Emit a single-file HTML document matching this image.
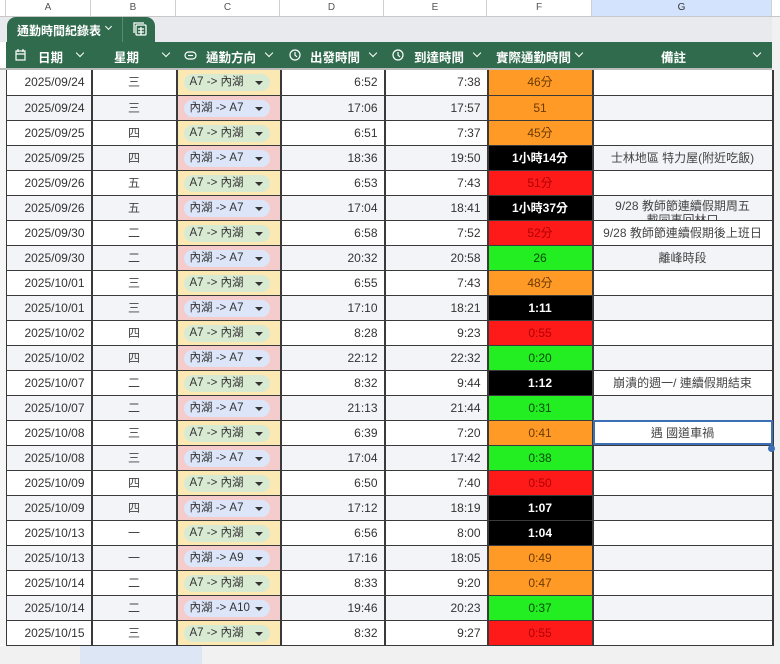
<!DOCTYPE html>
<html><head><meta charset="utf-8"><style>
*{box-sizing:border-box;margin:0;padding:0}
body{width:780px;height:664px;overflow:hidden;background:#fff;font-family:"Liberation Sans","Noto Sans CJK TC",sans-serif;font-size:12px;color:#333;position:relative}
.colh{position:absolute;top:0;left:0;width:780px;height:17px;background:#fff;border-bottom:1px solid #c7c7c7}
.colh div{position:absolute;top:0;height:16px;line-height:16px;text-align:center;font-size:10px;color:#555;border-right:1px solid #d0d0d0}
.tabbar{position:absolute;top:17px;left:0;width:772px;height:25px;background:#e9eaee}
.tab{position:absolute;top:17px;left:7px;width:148px;height:25px;background:#2f6b4c;border-radius:9px 9px 0 0;color:#fff;font-size:12px;font-weight:bold}
.hdr{position:absolute;top:42px;left:6px;width:766px;height:26px;background:#2f6b4c;color:#fff;font-weight:bold;font-size:12.5px}
.hdr span{position:absolute;top:5px}
.cv{position:absolute;width:6px;height:6px;border-right:1.5px solid #fff;border-bottom:1.5px solid #fff;transform:rotate(45deg)}
.hdr .cv{top:8px}
.gap{position:absolute;top:68px;left:0;width:772px;height:2px;background:#bbb}
table{position:absolute;top:70px;left:6px;border-collapse:collapse;table-layout:fixed;width:766px}
tr{height:25px}
td{height:25px;max-height:25px;line-height:14px;border:1px solid #3a3a3a;border-width:0 2px 1px 1px;padding:0 6px;white-space:nowrap;overflow:hidden;font-size:12px;color:#333;vertical-align:middle}
tr:nth-child(even) td{background:#f3f4f8}
td.r{text-align:right}td.c{text-align:center}
td.y{background:#fce8b2!important}td.p{background:#f4cccc!important}
.ch{display:inline-block;vertical-align:middle;height:17px;line-height:17px;border-radius:9px;padding:0 6px;width:86px;font-size:11.5px;position:relative;margin-top:1px}
.y .ch{background:#d9ead3;color:#333}.p .ch{background:#dce6f8;color:#333}
.ch:after{content:"";position:absolute;right:7px;top:7px;border:4px solid transparent;border-top:4px solid #333;border-bottom:0}
td.o{background:#ff9a26!important;color:#6b3a00;text-align:center}
td.k{background:#000!important;color:#fff;font-weight:bold;text-align:center}
td.rd{background:#ff1a1a!important;color:#b00000;text-align:center}
td.g{background:#22ee22!important;color:#0a4a0a;text-align:center}
td.n{text-align:center;color:#444}
.sel{outline:2px solid #3b6fb6;outline-offset:-2px}
.rn{position:absolute;left:0;top:70px;width:6px;height:575px;background:#f6f6f6}
.bot{position:absolute;left:0;top:646px;width:780px;height:18px;background:#f1f1f1}
.right{position:absolute;left:772px;top:17px;width:8px;height:630px;background:#f1f1f1}
</style></head><body>
<div class="colh">
<div style="left:0;width:6px"></div>
<div style="left:6px;width:85px">A</div>
<div style="left:91px;width:85px">B</div>
<div style="left:176px;width:104px">C</div>
<div style="left:280px;width:104px">D</div>
<div style="left:384px;width:103px">E</div>
<div style="left:487px;width:105px">F</div>
<div style="left:592px;width:180px;background:#d3e3fd;color:#333">G</div>
</div>
<div class="tabbar"></div>
<div class="tab"><span style="position:absolute;left:10px;top:5px">通勤時間紀錄表</span><span class="cv" style="left:99px;top:7px;width:5px;height:5px;border-width:0 1.3px 1.3px 0"></span><span style="position:absolute;left:115px;top:0;width:1px;height:25px;background:#5a8a70"></span>
<svg style="position:absolute;left:126px;top:5px" width="15" height="15" viewBox="0 0 15 15" fill="none" stroke="#fff" stroke-width="1.3"><rect x="3" y="3" width="10" height="10" rx="1"/><path d="M1 11V1h10M5 7h6M5 10h6M8 5v8"/></svg></div>
<div class="hdr">
<svg style="position:absolute;left:9px;top:7px" width="11" height="12" viewBox="0 0 11 12" fill="none" stroke="#fff" stroke-width="1.2"><rect x="1" y="2" width="9" height="9"/><path d="M1 5h9M3 0v3M8 0v3"/></svg>
<span style="left:32px">日期</span><span class="cv" style="left:71px"></span>
<span style="left:108px">星期</span><span class="cv" style="left:157px"></span>
<svg style="position:absolute;left:178px;top:9px" width="13" height="9" viewBox="0 0 13 9" fill="none" stroke="#fff" stroke-width="1.2"><rect x="1" y="1" width="11" height="7" rx="3.5"/><path d="M4 4.5h5"/></svg>
<span style="left:200px">通勤方向</span><span class="cv" style="left:260px"></span>
<svg style="position:absolute;left:283px;top:7px" width="12" height="12" viewBox="0 0 12 12" fill="none" stroke="#fff" stroke-width="1.2"><circle cx="6" cy="6" r="5"/><path d="M6 3v3l2 2"/></svg>
<span style="left:304px">出發時間</span><span class="cv" style="left:364px"></span>
<svg style="position:absolute;left:386px;top:7px" width="12" height="12" viewBox="0 0 12 12" fill="none" stroke="#fff" stroke-width="1.2"><circle cx="6" cy="6" r="5"/><path d="M6 3v3l2 2"/></svg>
<span style="left:408px">到達時間</span><span class="cv" style="left:468px"></span>
<span style="left:490px">實際通勤時間</span><span class="cv" style="left:570px"></span>
<span style="left:655px">備註</span><span class="cv" style="left:748px"></span>
</div>
<div class="gap"></div>
<div class="right"></div>
<div class="rn"></div>
<table>
<colgroup><col style="width:85px"><col style="width:85px"><col style="width:104px"><col style="width:104px"><col style="width:103px"><col style="width:105px"><col style="width:180px"></colgroup>
<tr><td class="r">2025/09/24</td><td class="n">三</td><td class="y"><span class="ch">A7 -&gt; 內湖</span></td><td class="r">6:52</td><td class="r">7:38</td><td class="o">46分</td><td></td></tr>
<tr><td class="r">2025/09/24</td><td class="n">三</td><td class="p"><span class="ch">內湖 -&gt; A7</span></td><td class="r">17:06</td><td class="r">17:57</td><td class="o">51</td><td></td></tr>
<tr><td class="r">2025/09/25</td><td class="n">四</td><td class="y"><span class="ch">A7 -&gt; 內湖</span></td><td class="r">6:51</td><td class="r">7:37</td><td class="o">45分</td><td></td></tr>
<tr><td class="r">2025/09/25</td><td class="n">四</td><td class="p"><span class="ch">內湖 -&gt; A7</span></td><td class="r">18:36</td><td class="r">19:50</td><td class="k">1小時14分</td><td class="n">士林地區 特力屋(附近吃飯)</td></tr>
<tr><td class="r">2025/09/26</td><td class="n">五</td><td class="y"><span class="ch">A7 -&gt; 內湖</span></td><td class="r">6:53</td><td class="r">7:43</td><td class="rd">51分</td><td></td></tr>
<tr><td class="r">2025/09/26</td><td class="n">五</td><td class="p"><span class="ch">內湖 -&gt; A7</span></td><td class="r">17:04</td><td class="r">18:41</td><td class="k">1小時37分</td><td class="n" style="padding:0"><div style="height:24px;overflow:hidden;line-height:14px;padding-top:3px">9/28 教師節連續假期周五<br>載同事回林口</div></td></tr>
<tr><td class="r">2025/09/30</td><td class="n">二</td><td class="y"><span class="ch">A7 -&gt; 內湖</span></td><td class="r">6:58</td><td class="r">7:52</td><td class="rd">52分</td><td class="n">9/28 教師節連續假期後上班日</td></tr>
<tr><td class="r">2025/09/30</td><td class="n">二</td><td class="p"><span class="ch">內湖 -&gt; A7</span></td><td class="r">20:32</td><td class="r">20:58</td><td class="g">26</td><td class="n">離峰時段</td></tr>
<tr><td class="r">2025/10/01</td><td class="n">三</td><td class="y"><span class="ch">A7 -&gt; 內湖</span></td><td class="r">6:55</td><td class="r">7:43</td><td class="o">48分</td><td></td></tr>
<tr><td class="r">2025/10/01</td><td class="n">三</td><td class="p"><span class="ch">內湖 -&gt; A7</span></td><td class="r">17:10</td><td class="r">18:21</td><td class="k">1:11</td><td></td></tr>
<tr><td class="r">2025/10/02</td><td class="n">四</td><td class="y"><span class="ch">A7 -&gt; 內湖</span></td><td class="r">8:28</td><td class="r">9:23</td><td class="rd">0:55</td><td></td></tr>
<tr><td class="r">2025/10/02</td><td class="n">四</td><td class="p"><span class="ch">內湖 -&gt; A7</span></td><td class="r">22:12</td><td class="r">22:32</td><td class="g">0:20</td><td></td></tr>
<tr><td class="r">2025/10/07</td><td class="n">二</td><td class="y"><span class="ch">A7 -&gt; 內湖</span></td><td class="r">8:32</td><td class="r">9:44</td><td class="k">1:12</td><td class="n">崩潰的週一/ 連續假期結束</td></tr>
<tr><td class="r">2025/10/07</td><td class="n">二</td><td class="p"><span class="ch">內湖 -&gt; A7</span></td><td class="r">21:13</td><td class="r">21:44</td><td class="g">0:31</td><td></td></tr>
<tr><td class="r">2025/10/08</td><td class="n">三</td><td class="y"><span class="ch">A7 -&gt; 內湖</span></td><td class="r">6:39</td><td class="r">7:20</td><td class="o">0:41</td><td class="n sel">遇 國道車禍</td></tr>
<tr><td class="r">2025/10/08</td><td class="n">三</td><td class="p"><span class="ch">內湖 -&gt; A7</span></td><td class="r">17:04</td><td class="r">17:42</td><td class="g">0:38</td><td></td></tr>
<tr><td class="r">2025/10/09</td><td class="n">四</td><td class="y"><span class="ch">A7 -&gt; 內湖</span></td><td class="r">6:50</td><td class="r">7:40</td><td class="rd">0:50</td><td></td></tr>
<tr><td class="r">2025/10/09</td><td class="n">四</td><td class="p"><span class="ch">內湖 -&gt; A7</span></td><td class="r">17:12</td><td class="r">18:19</td><td class="k">1:07</td><td></td></tr>
<tr><td class="r">2025/10/13</td><td class="n">一</td><td class="y"><span class="ch">A7 -&gt; 內湖</span></td><td class="r">6:56</td><td class="r">8:00</td><td class="k">1:04</td><td></td></tr>
<tr><td class="r">2025/10/13</td><td class="n">一</td><td class="p"><span class="ch">內湖 -&gt; A9</span></td><td class="r">17:16</td><td class="r">18:05</td><td class="o">0:49</td><td></td></tr>
<tr><td class="r">2025/10/14</td><td class="n">二</td><td class="y"><span class="ch">A7 -&gt; 內湖</span></td><td class="r">8:33</td><td class="r">9:20</td><td class="o">0:47</td><td></td></tr>
<tr><td class="r">2025/10/14</td><td class="n">二</td><td class="p"><span class="ch">內湖 -&gt; A10</span></td><td class="r">19:46</td><td class="r">20:23</td><td class="g">0:37</td><td></td></tr>
<tr><td class="r">2025/10/15</td><td class="n">三</td><td class="y"><span class="ch">A7 -&gt; 內湖</span></td><td class="r">8:32</td><td class="r">9:27</td><td class="rd">0:55</td><td></td></tr>
</table>
<div style="position:absolute;left:768px;top:445px;width:7px;height:7px;border-radius:50%;background:#3b6fb6"></div>
<div class="bot"><div style="position:absolute;left:80px;top:0;width:122px;height:18px;background:#dde6f5"></div></div>
</body></html>
